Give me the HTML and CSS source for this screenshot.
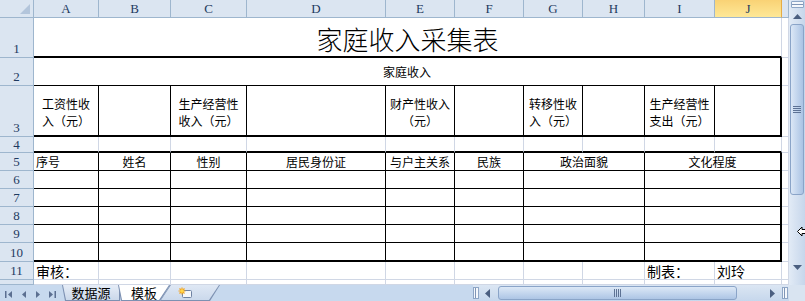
FILE: index.html
```html
<!DOCTYPE html>
<html lang="zh-CN">
<head>
    <meta charset="UTF-8">
    <title>家庭收入采集表</title>
    <link rel="stylesheet" href="styles.css">
</head>
<body>
<div class="window">
    <div class="main">
        <div class="sheet">
            <!-- 列标题 -->
            <div class="corner"></div>
            <div class="colh">A</div>
            <div class="colh">B</div>
            <div class="colh">C</div>
            <div class="colh">D</div>
            <div class="colh">E</div>
            <div class="colh">F</div>
            <div class="colh">G</div>
            <div class="colh">H</div>
            <div class="colh">I</div>
            <div class="colh sel">J</div>
            <div class="colh"></div>

            <!-- 第1行 标题 -->
            <div class="rowh">1</div>
            <div class="c title">家庭收入采集表</div>
            <div class="c"></div>

            <!-- 第2行 -->
            <div class="rowh">2</div>
            <div class="c r2">家庭收入</div>
            <div class="c"></div>

            <!-- 第3行 收入项 -->
            <div class="rowh">3</div>
            <div class="c r3">工资性收<br>入（元）</div>
            <div class="c r3"></div>
            <div class="c r3">生产经营性<br>收入（元）</div>
            <div class="c r3"></div>
            <div class="c r3">财产性收入<br>（元）</div>
            <div class="c r3"></div>
            <div class="c r3">转移性收<br>入（元）</div>
            <div class="c r3"></div>
            <div class="c r3">生产经营性<br>支出（元）</div>
            <div class="c r3 last"></div>
            <div class="c"></div>

            <!-- 第4行 空行 -->
            <div class="rowh short">4</div>
            <div class="c r4"></div>
            <div class="c r4"></div>
            <div class="c r4"></div>
            <div class="c r4"></div>
            <div class="c r4"></div>
            <div class="c r4"></div>
            <div class="c r4"></div>
            <div class="c r4"></div>
            <div class="c r4"></div>
            <div class="c r4"></div>
            <div class="c"></div>

            <!-- 第5行 表头 -->
            <div class="rowh">5</div>
            <div class="c t left">序号</div>
            <div class="c t">姓名</div>
            <div class="c t">性别</div>
            <div class="c t">居民身份证</div>
            <div class="c t">与户主关系</div>
            <div class="c t">民族</div>
            <div class="c t span2">政治面貌</div>
            <div class="c t span2 last">文化程度</div>
            <div class="c"></div>

            <!-- 第6-10行 数据 -->
            <div class="rowh">6</div>
            <div class="c t"></div><div class="c t"></div><div class="c t"></div><div class="c t"></div>
            <div class="c t"></div><div class="c t"></div><div class="c t span2"></div><div class="c t span2 last"></div>
            <div class="c"></div>

            <div class="rowh">7</div>
            <div class="c t"></div><div class="c t"></div><div class="c t"></div><div class="c t"></div>
            <div class="c t"></div><div class="c t"></div><div class="c t span2"></div><div class="c t span2 last"></div>
            <div class="c"></div>

            <div class="rowh">8</div>
            <div class="c t"></div><div class="c t"></div><div class="c t"></div><div class="c t"></div>
            <div class="c t"></div><div class="c t"></div><div class="c t span2"></div><div class="c t span2 last"></div>
            <div class="c"></div>

            <div class="rowh">9</div>
            <div class="c t"></div><div class="c t"></div><div class="c t"></div><div class="c t"></div>
            <div class="c t"></div><div class="c t"></div><div class="c t span2"></div><div class="c t span2 last"></div>
            <div class="c"></div>

            <div class="rowh">10</div>
            <div class="c t bot"></div><div class="c t bot"></div><div class="c t bot"></div><div class="c t bot"></div>
            <div class="c t bot"></div><div class="c t bot"></div><div class="c t bot span2"></div><div class="c t bot span2 last"></div>
            <div class="c"></div>

            <!-- 第11行 签字 -->
            <div class="rowh">11</div>
            <div class="c foot">审核：</div>
            <div class="c"></div><div class="c"></div><div class="c"></div><div class="c"></div>
            <div class="c"></div><div class="c"></div><div class="c"></div>
            <div class="c foot">制表：</div>
            <div class="c foot">刘玲</div>
            <div class="c"></div>

            <!-- 第12行（被截断） -->
            <div class="rowh"></div>
            <div class="c"></div><div class="c"></div><div class="c"></div><div class="c"></div><div class="c"></div>
            <div class="c"></div><div class="c"></div><div class="c"></div><div class="c"></div><div class="c"></div>
            <div class="c"></div>
        </div>

        <div class="vscroll">
            <div class="vsplit"></div>
            <div class="varrow">
                <svg width="9" height="5" viewBox="0 0 9 5"><polygon points="4.5,0 9,5 0,5" fill="#4b5f80"/></svg>
            </div>
            <div class="vthumb">
                <svg width="8" height="7" viewBox="0 0 8 7"><path d="M0 .5h8M0 2.5h8M0 4.5h8M0 6.5h8" stroke="#5d7294" stroke-width="1"/></svg>
            </div>
            <div class="vfill"></div>
            <div class="varrow">
                <svg width="9" height="5" viewBox="0 0 9 5"><polygon points="0,0 9,0 4.5,5" fill="#4b5f80"/></svg>
            </div>
            <svg class="cursor" width="9" height="11" viewBox="0 0 9 11">
                <polygon points="0.5,5.5 5,1 5,3.5 9,3.5 9,7.5 5,7.5 5,10 " fill="#fff" stroke="#000" stroke-width="1"/>
            </svg>
        </div>
    </div>

    <div class="tabbar">
        <div class="nav">
            <svg width="62" height="16" viewBox="0 0 62 16">
                <rect x="5" y="6" width="1.5" height="7" fill="#5b6f91"/>
                <polygon points="8,9.5 12,6 12,13" fill="#5b6f91"/>
                <polygon points="22,9.5 26,6 26,13" fill="#5b6f91"/>
                <polygon points="40,9.5 36,6 36,13" fill="#5b6f91"/>
                <polygon points="53,9.5 49,6 49,13" fill="#5b6f91"/>
                <rect x="54.5" y="6" width="1.5" height="7" fill="#5b6f91"/>
            </svg>
        </div>
        <div class="tab"><span>数据源</span></div>
        <div class="tab active"><span>模板</span></div>
        <div class="tab add">
            <span>
                <svg width="16" height="12" viewBox="0 0 16 12">
                    <rect x="4.5" y="3.5" width="9" height="7" rx="1" fill="#f4f7fb" stroke="#6e82a3"/>
                    <path d="M4 0.5v7M0.5 4h7M1.5 1.5l5 5M6.5 1.5l-5 5" stroke="#f3a21c" stroke-width="1.2"/>
                    <circle cx="4" cy="4" r="1.8" fill="#ffd84a"/>
                </svg>
            </span>
        </div>
        <div class="tabfill"></div>
        <div class="hscroll">
            <div class="hsplit"></div>
            <div class="harrow">
                <svg width="5" height="9" viewBox="0 0 5 9"><polygon points="0,4.5 5,0 5,9" fill="#4b5f80"/></svg>
            </div>
            <div class="hthumb">
                <svg width="7" height="8" viewBox="0 0 7 8"><path d="M.5 0v8M2.5 0v8M4.5 0v8M6.5 0v8" stroke="#5d7294" stroke-width="1"/></svg>
            </div>
            <div class="hfill"></div>
            <div class="harrow">
                <svg width="5" height="9" viewBox="0 0 5 9"><polygon points="5,4.5 0,0 0,9" fill="#4b5f80"/></svg>
            </div>
            <div class="hsplit"></div>
        </div>
        <div class="sizer"></div>
    </div>
</div>
</body>
</html>
```

FILE: styles.css
```css
body {
    margin: 0;
    font-family: "Noto Sans CJK SC", sans-serif;
    background: #fff;
    color: #000;
}
.window {
    width: 805px;
    height: 301px;
    overflow: hidden;
    display: flex;
    flex-direction: column;
}
.main {
    display: flex;
    height: 285px;
}

/* 工作表网格 */
.sheet {
    display: grid;
    grid-template-columns: 34px 65px 72px 76px 139px 69px 69px 59px 62px 70px 67px 7px;
    grid-template-rows: 18px 40px 28px 51px 16px 18px 18px 18px 18px 18px 19px 18px 5px;
    width: 789px;
    height: 285px;
    overflow: hidden;
}
.sheet > div {
    box-sizing: border-box;
    overflow: hidden;
}
.corner,
.colh,
.rowh {
    background: #dbe5f1;
    border-right: 1px solid #9eb6ce;
    border-bottom: 1px solid #9eb6ce;
    color: #1e3a5f;
    font: 13px "Liberation Serif", serif;
    display: flex;
    justify-content: center;
}
.colh {
    align-items: center;
    padding-top: 1px;
}
.colh.sel {
    background: linear-gradient(#f9d275, #fee897);
    border-right-color: #e6ad45;
}
.rowh {
    align-items: flex-end;
    line-height: 13px;
    padding-bottom: 2px;
}
.rowh.short {
    padding-bottom: 1px;
}
.corner {
    justify-content: flex-end;
    align-items: flex-end;
    padding: 0 3px 3px 0;
}
.corner::after {
    content: "";
    border-left: 10px solid transparent;
    border-bottom: 10px solid #b3c5db;
}

/* 单元格 */
.c {
    border-right: 1px solid #d0d7e5;
    border-bottom: 1px solid #d0d7e5;
    font-size: 12px;
    line-height: 16px;
    display: flex;
    align-items: center;
    justify-content: center;
    white-space: nowrap;
}
.span2 {
    grid-column: span 2;
}
.title {
    grid-column: span 10;
    border-bottom: 2px solid #000;
    font-size: 26px;
    font-weight: 300;
    line-height: 30px;
    padding-top: 3px;
}
.r2 {
    grid-column: span 10;
    border-bottom: 1px solid #000;
    border-right: 2px solid #000;
}
.r3 {
    border-right: 1px solid #000;
    border-bottom: 2px solid #000;
    align-items: flex-end;
    text-align: center;
    line-height: 17px;
    padding-bottom: 6px;
}
.r4 {
    border-bottom: 2px solid #000;
}
.t {
    border-right: 1px solid #000;
    border-bottom: 1px solid #000;
}
.t.left {
    justify-content: flex-start;
    padding-left: 2px;
}
.t.bot {
    border-bottom: 2px solid #000;
}
.last {
    border-right: 2px solid #000 !important;
}
.foot {
    font-size: 14px;
    justify-content: flex-start;
    padding-left: 2px;
}

/* 垂直滚动条 */
.vscroll {
    position: relative;
    width: 16px;
    display: flex;
    flex-direction: column;
    align-items: center;
    background: linear-gradient(90deg, #e2ebf6, #c6d6eb);
}
.vsplit {
    box-sizing: border-box;
    width: 13px;
    height: 7px;
    margin-top: 1px;
    border: 1px solid #8ea6c6;
    border-radius: 1px;
    background: linear-gradient(#f5f8fc 0 2px, #7f95b6 2px 3px, #f5f8fc 3px);
}
.varrow {
    height: 16px;
    display: flex;
    align-items: center;
    justify-content: center;
}
.vthumb {
    box-sizing: border-box;
    width: 14px;
    height: 171px;
    border: 1px solid #8aa4c8;
    border-radius: 3px;
    background: linear-gradient(90deg, #dbe7f6, #aac3e4);
    display: flex;
    align-items: center;
    justify-content: center;
}
.vfill {
    flex: 1;
}
.vscroll .varrow:last-of-type {
    margin-bottom: 10px;
}
.cursor {
    position: absolute;
    left: 8px;
    top: 226px;
}

/* 工作表标签栏 */
.tabbar {
    display: flex;
    height: 16px;
    background: #c7d9ee;
}
.nav {
    width: 62px;
    flex-shrink: 0;
}
.nav svg {
    display: block;
}
.tab {
    position: relative;
    flex-shrink: 0;
    height: 16px;
    background: #7d91b2;
    font-size: 13px;
    line-height: 15px;
}
.tab span {
    display: flex;
    justify-content: center;
    height: 15px;
    margin: 0 1px;
}
.tab:nth-child(2) {
    width: 58px;
    clip-path: polygon(0 0, 100% 0, 100% 100%, 3px 100%);
}
.tab:nth-child(2) span {
    background: linear-gradient(#e6edf7, #cbd8ea);
    clip-path: polygon(0 0, 100% 0, 100% 100%, 3px 100%);
}
.tab.active {
    width: 52px;
    margin-left: -2px;
    z-index: 2;
    clip-path: polygon(0 0, 100% 0, calc(100% - 10px) 100%, 3px 100%);
}
.tab.active span {
    background: #fff;
    clip-path: polygon(0 0, 100% 0, calc(100% - 10px) 100%, 3px 100%);
}
.tab.add {
    width: 60px;
    margin-left: -10px;
    z-index: 1;
    clip-path: polygon(10px 0, 100% 0, calc(100% - 10px) 100%, 0 100%);
}
.tab.add span {
    align-items: center;
    padding-right: 8px;
    box-sizing: border-box;
    background: linear-gradient(#dfe8f4, #cbd9ec);
    clip-path: polygon(10px 0, 100% 0, calc(100% - 10px) 100%, 0 100%);
}
.tabfill {
    flex: 1;
}

/* 水平滚动条 */
.hscroll {
    width: 316px;
    flex-shrink: 0;
    display: flex;
    align-items: center;
    padding-right: 1px;
    box-sizing: border-box;
    background: linear-gradient(#dbe6f3, #c6d7ec);
}
.hsplit {
    box-sizing: border-box;
    width: 6px;
    height: 12px;
    border: 1px solid #8ea6c6;
    background: linear-gradient(90deg, #f5f8fc 0 1px, #7f95b6 1px 2px, #f5f8fc 2px);
}
.hscroll .hsplit:last-child {
    margin-left: 2px;
}
.harrow {
    width: 16px;
    display: flex;
    justify-content: center;
}
.hthumb {
    box-sizing: border-box;
    width: 239px;
    height: 14px;
    margin-left: 3px;
    border: 1px solid #8aa4c8;
    border-radius: 3px;
    background: linear-gradient(#dce8f6, #adc5e5);
    display: flex;
    align-items: center;
    justify-content: center;
}
.hfill {
    flex: 1;
}
.sizer {
    width: 16px;
    flex-shrink: 0;
    background: #d9e4f1;
}
```
